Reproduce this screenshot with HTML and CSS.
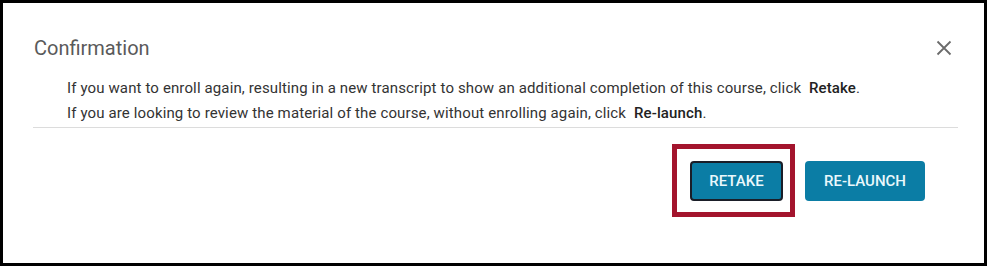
FILE: index.html
```html
<!DOCTYPE html>
<html lang="en">
<head>
<meta charset="utf-8">
<title>Confirmation</title>
<link rel="stylesheet" href="styles.css">
</head>
<body>
<div class="frame">
  <div class="header">
    <div class="title">Confirmation</div>
    <svg class="close" width="16" height="16" viewBox="0 0 16 16" aria-label="Close">
      <path d="M1.5 1.5 L14.5 14.5 M14.5 1.5 L1.5 14.5" stroke="#6b6b6b" stroke-width="1.8" fill="none"/>
    </svg>
  </div>
  <div class="content">
    <p class="line">If you want to enroll again, resulting in a new transcript to show an additional completion of this course, click <b class="kw">Retake</b>.</p>
    <p class="line">If you are looking to review the material of the course, without enrolling again, click <b class="kw">Re-launch</b>.</p>
  </div>
  <div class="footer">
    <div class="highlight">
      <button class="btn btn-retake">RETAKE</button>
    </div>
    <button class="btn btn-relaunch">RE-LAUNCH</button>
  </div>
</div>
</body>
</html>
```

FILE: styles.css
```css
html, body {
  margin: 0;
  padding: 0;
  background: #ffffff;
}
body {
  font-family: Roboto, "Liberation Sans", Arial, sans-serif;
}
.frame {
  box-sizing: border-box;
  width: 987px;
  height: 266px;
  border: 3px solid #000;
  padding-top: 33px;
  background: #fff;
}
.header {
  display: flex;
  justify-content: space-between;
  align-items: center;
  height: 24px;
  padding: 0 32px 0 31px;
}
.title {
  font-size: 20px;
  line-height: 24px;
  color: #5a5a5a;
}
.close {
  display: block;
}
.content {
  margin: 16px 26px 0 30px;
  padding: 0 0 1px 34px;
  border-bottom: 1px solid #dcdcdc;
}
.line {
  margin: 0;
  font-size: 15px;
  line-height: 25px;
  letter-spacing: 0.13px;
  color: #333;
}
.kw {
  font-weight: 500;
  color: #222;
  margin-left: 4px;
}
.footer {
  display: flex;
  justify-content: flex-end;
  align-items: center;
  padding: 16px 59px 0 0;
}
.highlight {
  border: 5px solid #a3142d;
  padding: 12px 7px 11px 13px;
  margin-right: 10px;
}
.btn {
  display: block;
  box-sizing: border-box;
  height: 40px;
  margin: 0;
  border-radius: 4px;
  background: #0b7da5;
  color: #eaf8fc;
  font-family: Roboto, "Liberation Sans", Arial, sans-serif;
  font-size: 15px;
  font-weight: 500;
  padding: 0;
  text-align: center;
}
.btn-retake {
  width: 93px;
  border: 2px solid #1a1e28;
}
.btn-relaunch {
  width: 120px;
  border: 0;
}
```
